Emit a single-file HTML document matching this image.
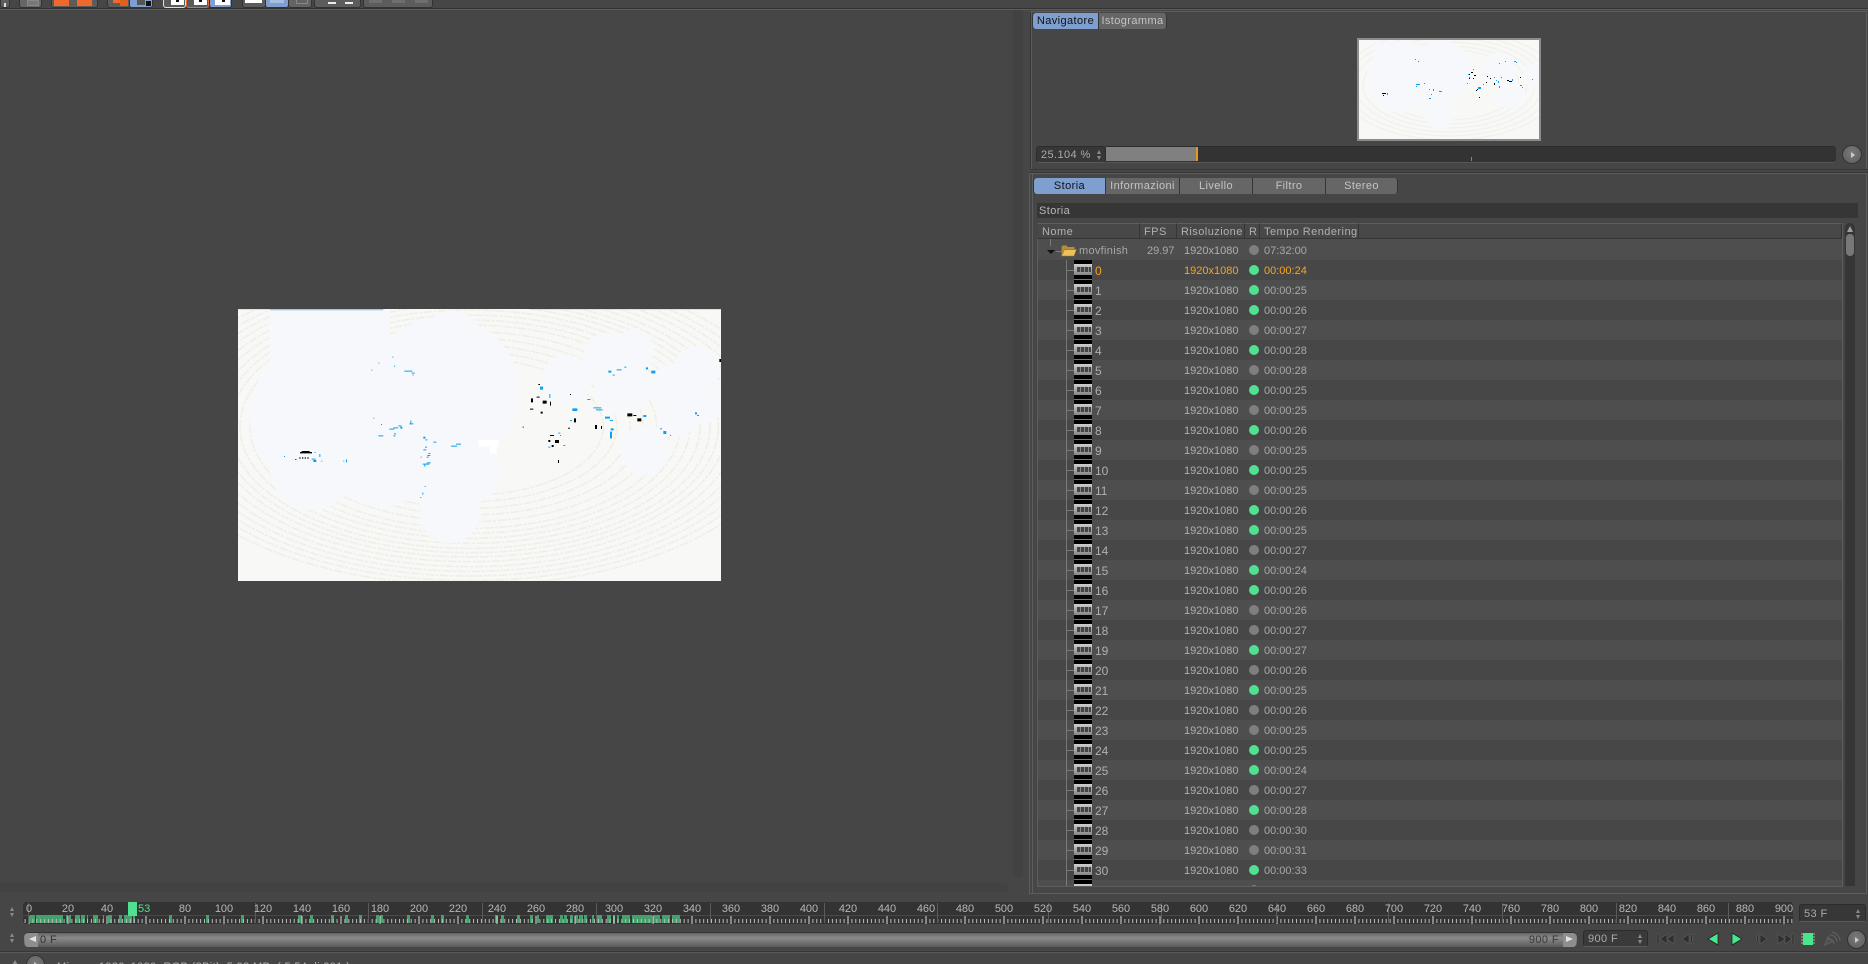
<!DOCTYPE html>
<html><head><meta charset="utf-8"><style>
html,body{margin:0;padding:0;background:#464646}
#p{position:relative;width:1868px;height:964px;overflow:hidden;background:#464646;font:11px "Liberation Sans",sans-serif;color:#b0b0b0}
.t{position:absolute;top:0;height:7px;background:#5c5c5c;border:1px solid #333;border-top:0;border-radius:0 0 3px 3px}
.o{position:absolute;top:0;height:6px;background:#f0682e}
.l{position:absolute;background:#5d5d5d}
.d{position:absolute;background:#363636}
.tab{position:absolute;height:16px;line-height:17px;background:#666;color:#c4c4c4;text-align:center;letter-spacing:.4px;border-right:1px solid #353535;box-sizing:border-box}
.on{background:#7f9fd0;color:#111}
.h{position:absolute;top:223px;height:16px;line-height:16px;background:#484848;border-top:1px solid #5e5e5e;border-bottom:1px solid #353535;border-right:1px solid #353535;box-sizing:border-box;padding-left:4px;color:#b0b0b0;letter-spacing:.45px;white-space:nowrap;overflow:hidden}
#list{position:absolute;left:1038px;top:239px;width:804px;height:647px;overflow:hidden;background:#474747}
.r{position:relative;height:20px;background:#474747}
.r.x{background:#4e4e4e}
.r>*{position:absolute;top:4px;line-height:14px;font-style:normal;font-weight:normal;text-decoration:none;white-space:nowrap}
.r b{left:57px;color:#b0b0b0;font-size:12px}
.r i{left:146px;color:#aab0b4}
.r em{left:226px;color:#a8a8a8}
.r u{left:211px;top:5px;width:10px;height:10px;border-radius:50%;background:#50e090}
.r u.g{background:#7f7f7f}
.r s{left:36px;top:0;width:18px;height:20px;background:linear-gradient(#000 0,#000 4px,#cfcfcf 4px,#858585 15px,#000 15px,#000 19px,#777 19px)}
.r s:after{content:"";position:absolute;left:3px;top:7px;width:14px;height:5px;background:repeating-linear-gradient(90deg,#444 0,#444 3px,#888 3px,#888 4px)}
.r q{left:28px;top:10px;width:8px;height:1px;background:#7a7a7a;quotes:none}
.r.c b{color:#f5a623}.r.c i{color:#f5a623}.r.c em{color:#f5a623}
.r.m>*{top:5px}
.fld{position:absolute;background:#373737;border:1px solid #2c2c2c;border-bottom-color:#5a5a5a;border-radius:3px;box-sizing:border-box;color:#aaa;line-height:17px;padding-left:4px;letter-spacing:.4px}
.sp{position:absolute;width:7px;height:13px}
.sp:before,.sp:after{content:"";position:absolute;left:0;border-left:3.5px solid transparent;border-right:3.5px solid transparent}
.sp:before{top:0;border-bottom:5px solid #8a8a8a}
.sp:after{bottom:0;border-top:5px solid #8a8a8a}
.sp.n{width:5px;height:10px}
.sp.n:before{border-left-width:2.5px;border-right-width:2.5px;border-bottom-width:4px}
.sp.n:after{border-left-width:2.5px;border-right-width:2.5px;border-top-width:4px}
.cb{position:absolute;border-radius:50%;background:radial-gradient(circle at 50% 40%,#7a7a7a,#5c5c5c);border:1px solid #333;box-sizing:border-box}
.cb:after{content:"";position:absolute;left:42%;top:35%;border-left:4px solid #ccc;border-top:3px solid transparent;border-bottom:3px solid transparent}
</style></head><body><div id="p">

<!-- toolbar -->
<div class="t" style="left:0;width:8px"><div style="position:absolute;left:3px;top:3px;width:2px;height:4px;background:#ddd"></div></div>
<div class="t" style="left:19px;width:21px;background:#666"><div style="position:absolute;left:7px;top:0;width:10px;height:4px;background:#777;border:1px solid #888"></div></div>
<div class="t" style="left:51px;width:45px"></div><div class="o" style="left:54px;width:15px"></div><div class="o" style="left:77px;width:15px"></div>
<div class="t" style="left:107px;width:22px"></div><div class="o" style="left:113px;width:7px;height:3px"></div><div class="o" style="left:120px;width:8px;background:#e0601e"></div>
<div class="t" style="left:129px;width:22px;background:#7f9fd0"><div style="position:absolute;left:7px;top:0;width:8px;height:5px;background:#555"></div><div style="position:absolute;left:16px;top:1px;width:5px;height:5px;background:#111"></div></div>
<div class="t" style="left:163px;width:21px;background:#5a5a5a;border-color:#ddd"><div style="position:absolute;left:7px;top:0;width:13px;height:5px;background:#fff"></div><div style="position:absolute;left:12px;top:0;width:3px;height:2px;background:#111"></div></div>
<div class="t" style="left:186px;width:21px;background:#5a5a5a;border-color:#e86a30"><div style="position:absolute;left:7px;top:0;width:13px;height:5px;background:#fff"></div><div style="position:absolute;left:12px;top:0;width:3px;height:2px;background:#111"></div></div>
<div class="t" style="left:209px;width:21px;background:#7f9fd0"><div style="position:absolute;left:5px;top:0;width:15px;height:5px;background:#fff"></div><div style="position:absolute;left:12px;top:0;width:3px;height:2px;background:#111"></div></div>
<div class="t" style="left:242px;width:22px"><div style="position:absolute;left:2px;top:0;width:17px;height:3px;background:#fff"></div></div>
<div class="t" style="left:265px;width:22px;background:#7f9fd0"><div style="position:absolute;left:4px;top:0;width:14px;height:3px;background:#a8bede"></div></div>
<div class="t" style="left:288px;width:22px;background:#636363"><div style="position:absolute;left:7px;top:0;width:10px;height:3px;border:1px solid #888;border-top:0"></div></div>
<div class="t" style="left:314px;width:45px"></div>
<div class="o" style="left:328px;width:8px;height:2px;top:2px;background:#eee"></div><div class="o" style="left:345px;width:8px;height:2px;top:2px;background:#eee"></div>
<div class="t" style="left:363px;width:68px"></div>
<div class="o" style="left:369px;width:13px;height:3px;background:#6e6e6e"></div><div class="o" style="left:392px;width:13px;height:3px;background:#6e6e6e"></div><div class="o" style="left:415px;width:13px;height:3px;background:#6e6e6e"></div>
<div class="d" style="left:0;top:8px;width:1868px;height:1px;background:#333"></div>
<div class="l" style="left:0;top:9px;width:1868px;height:1px"></div>

<!-- viewport scrollbars -->
<div style="position:absolute;left:1013px;top:10px;width:10px;height:868px;background:#424242;border-radius:0 0 5px 5px"></div>
<div style="position:absolute;left:0;top:883px;width:1008px;height:9px;background:#424242;border-radius:0 4px 4px 0"></div>

<!-- main image -->
<svg style="position:absolute;left:238px;top:309px" width="483" height="272" viewBox="24 27 1449 816">
<rect x="24" y="27" width="1449" height="816" fill="#f8f9f6"/>
<g fill="none" stroke="#efefe9" stroke-width="5" stroke-dasharray="26 5 9 4">
<ellipse cx="720" cy="380" rx="400" ry="205"/><ellipse cx="720" cy="380" rx="440" ry="225"/><ellipse cx="720" cy="380" rx="480" ry="245"/><ellipse cx="720" cy="380" rx="520" ry="265"/><ellipse cx="720" cy="380" rx="560" ry="285"/><ellipse cx="720" cy="380" rx="600" ry="305"/><ellipse cx="720" cy="380" rx="630" ry="320"/><ellipse cx="720" cy="380" rx="660" ry="335"/><ellipse cx="720" cy="380" rx="690" ry="350"/><ellipse cx="720" cy="380" rx="720" ry="365"/><ellipse cx="720" cy="380" rx="745" ry="378"/><ellipse cx="720" cy="380" rx="770" ry="391"/><ellipse cx="720" cy="380" rx="800" ry="405"/><ellipse cx="720" cy="380" rx="830" ry="420"/><ellipse cx="720" cy="380" rx="860" ry="434"/><ellipse cx="720" cy="380" rx="890" ry="448"/><ellipse cx="720" cy="380" rx="920" ry="462"/><ellipse cx="720" cy="380" rx="955" ry="476"/>
</g>
<g fill="#f6f8fc">
<rect x="120" y="30" width="360" height="260"/><circle cx="665" cy="120" r="88"/><circle cx="640" cy="280" r="230"/><circle cx="300" cy="350" r="240"/><circle cx="250" cy="500" r="130"/><circle cx="450" cy="450" r="170"/><circle cx="720" cy="520" r="92"/><circle cx="660" cy="640" r="90"/><circle cx="560" cy="500" r="100"/><circle cx="1130" cy="170" r="70"/><circle cx="1210" cy="150" r="60"/><circle cx="1010" cy="240" r="75"/><circle cx="1180" cy="260" r="85"/><circle cx="1330" cy="260" r="70"/><circle cx="1400" cy="210" r="70"/><circle cx="1420" cy="310" r="60"/><circle cx="1340" cy="350" r="60"/><circle cx="1245" cy="450" r="75"/>
</g>
<rect x="120" y="27" width="340" height="4" fill="#8fcdf0"/><rect x="24" y="27" width="96" height="3" fill="#d5e2ea"/><rect x="900" y="27" width="573" height="3" fill="#e6ded6"/>
<path fill="#0ca0f0" d="M523 212h24v3h-24zM545 218h9v3h-9zM548 224h3v3h-3zM424 209h3v3h-3zM445 188h3v3h-3zM487 170h3v3h-3zM492 197h3v3h-3zM478 386h15v3h-15zM490 382h15v3h-15zM505 376h9v3h-9zM511 380h6v6h-6zM541 362h3v9h-3zM538 370h12v3h-12zM445 406h15v3h-15zM490 406h6v3h-6zM492 400h6v3h-6zM430 353h3v3h-3zM453 372h3v3h-3zM580 410h6v6h-6zM586 418h6v3h-6zM610 425h9v3h-9zM663 437h18v3h-18zM678 431h15v3h-15zM592 465h9v3h-9zM595 459h6v3h-6zM590 470h6v3h-6zM583 494h3v6h-3zM578 491h20v3h-20zM590 487h12v3h-12zM585 440h6v3h-6zM580 448h9v3h-9zM572 470h3v3h-3zM584 558h3v3h-3zM577 578h3v6h-3zM571 591h3v3h-3zM245 476h12v3h-12zM250 480h9v6h-9zM268 462h3v9h-3zM274 482h3v3h-3zM254 456h3v3h-3zM162 468h3v3h-3zM340 482h3v3h-3zM348 478h3v9h-3zM930 260h9v9h-9zM958 282h3v12h-3zM1027 325h15v8h-15zM1020 360h6v3h-6zM1072 297h9v3h-9zM1090 322h24v3h-24zM1098 328h20v3h-20zM1125 350h15v6h-15zM1140 360h9v3h-9zM1142 385h9v6h-9zM1140 395h6v20h-6zM1135 212h9v6h-9zM1148 224h6v3h-6zM1160 208h15v3h-15zM1183 200h6v3h-6zM1248 202h6v6h-6zM1264 212h12v8h-12zM1240 345h9v6h-9zM1395 337h6v6h-6zM1401 345h6v3h-6zM1300 393h9v9h-9zM1290 385h6v3h-6zM1320 405h3v3h-3zM985 398h6v3h-6zM955 440h6v3h-6zM1000 435h6v3h-6zM990 405h3v3h-3z"/>
<path fill="#000" d="M215 453h24v3h-24zM210 456h36v4h-36zM208 472h4v4h-4zM216 472h4v4h-4zM224 472h4v4h-4zM232 472h4v4h-4zM196 477h3v3h-3zM903 295h6v12h-6zM938 302h12v9h-12zM925 252h5v3h-5zM920 290h9v3h-9zM900 326h10v3h-10zM932 335h6v6h-6zM960 305h3v12h-3zM1020 282h3v3h-3zM1032 355h6v12h-6zM1095 375h6v12h-6zM1113 378h3v9h-3zM1192 340h15v9h-15zM1222 355h12v9h-12zM1210 345h9v3h-9zM960 405h12v3h-12zM975 420h12v9h-12zM955 420h6v6h-6zM965 435h6v6h-6zM984 480h3v9h-3zM878 380h3v3h-3zM1468 177h5v9h-5zM1015 383h4v4h-4z"/>
<path fill="#fff" d="M745 420h60v20h-60zM780 440h20v20h-20z"/>
</svg>

<!-- Navigator panel -->
<div class="l" style="left:1030px;top:11px;width:837px;height:1px"></div>
<div class="d" style="left:1030px;top:12px;width:1px;height:157px"></div>
<div class="l" style="left:1031px;top:12px;width:1px;height:157px"></div>
<div class="l" style="left:1866px;top:12px;width:1px;height:157px"></div>
<div class="d" style="left:1030px;top:169px;width:838px;height:1px"></div>
<div class="tab on" style="left:1033px;top:13px;width:66px;border-radius:3px 0 0 3px;box-shadow:-1px 0 0 #333">Navigatore</div>
<div class="tab" style="left:1099px;top:13px;width:68px;border-radius:0 3px 3px 0">Istogramma</div>
<svg style="position:absolute;left:1357px;top:38px;border:2px solid #8c8c8c;box-sizing:border-box" width="184" height="103" viewBox="0 0 180 99">
<rect width="180" height="99" fill="#f8f9f6"/>
<g fill="none" stroke="#f1f1ec" stroke-width="1.2"><ellipse cx="90" cy="45" rx="70" ry="35"/><ellipse cx="90" cy="45" rx="78" ry="39"/><ellipse cx="90" cy="45" rx="86" ry="43"/><ellipse cx="90" cy="45" rx="94" ry="47"/><ellipse cx="90" cy="45" rx="102" ry="51"/><ellipse cx="90" cy="45" rx="110" ry="55"/></g>
<g fill="#f6f8fc"><circle cx="82" cy="30" r="30"/><circle cx="40" cy="40" r="32"/><circle cx="80" cy="75" r="14"/><rect x="15" y="2" width="45" height="30"/><circle cx="140" cy="30" r="17"/><circle cx="152" cy="55" r="14"/><circle cx="175" cy="35" r="11"/></g>
<path fill="#0ca0f0" d="M28 53h1v2h-1zM56 19h1v1h-1zM59 21h1v1h-1zM57 44h4v1h-4zM57 46h1v1h-1zM65 43h1v1h-1zM70 49h1v1h-1zM74 49h1v2h-1zM72 54h1v1h-1zM70 58h2v1h-2zM80 51h3v1h-3zM114 29h1v1h-1zM109 34h1v1h-1zM108 43h1v1h-1zM110 37h1v1h-1zM124 44h1v1h-1zM119 47h3v2h-3zM135 37h1v1h-1zM137 40h1v1h-1zM142 37h1v1h-1zM139 41h1v2h-1zM140 46h1v2h-1zM153 39h1v2h-1zM161 45h2v1h-2zM163 47h1v1h-1zM173 39h1v1h-1zM140 23h1v1h-1zM146 21h1v1h-1zM155 21h2v1h-2zM157 22h1v1h-1z"/>
<path fill="#000" d="M23 53h4v1h-4zM24 55h1v1h-1zM112 32h2v1h-2zM110 34h1v1h-1zM115 35h2v1h-2zM114 38h1v1h-1zM110 38h1v1h-1zM127 42h1v1h-1zM128 36h1v1h-1zM131 38h1v1h-1zM135 43h1v2h-1zM148 40h2v1h-2zM150 41h3v1h-3zM161 37h1v1h-1zM120 57h1v1h-1zM118 49h1v1h-1zM117 50h1v1h-1z"/>
</svg>
<div class="fld" style="left:1036px;top:146px;width:70px;height:17px;line-height:17px">25.104 %<span class="sp n" style="left:60px;top:3px"></span></div>
<div style="position:absolute;left:1106px;top:146px;width:730px;height:17px;background:#333;border-top:1px solid #2b2b2b;border-bottom:1px solid #565656;box-sizing:border-box;border-radius:0 3px 3px 0"></div>
<div style="position:absolute;left:1106px;top:147px;width:90px;height:14px;background:#808080"></div>
<div style="position:absolute;left:1196px;top:147px;width:2px;height:14px;background:#e09a20"></div>
<div style="position:absolute;left:1471px;top:157px;width:1px;height:4px;background:#a8842e"></div>
<div class="cb" style="left:1842px;top:145px;width:20px;height:19px"></div>

<!-- History panel -->
<div class="d" style="left:1030px;top:172px;width:838px;height:1px"></div>
<div class="l" style="left:1030px;top:173px;width:837px;height:1px"></div>
<div class="l" style="left:1029px;top:174px;width:1px;height:719px"></div>
<div class="l" style="left:1032px;top:174px;width:1px;height:719px"></div>
<div class="l" style="left:1866px;top:174px;width:1px;height:719px"></div>
<div class="l" style="left:1029px;top:893px;width:838px;height:1px"></div>
<div class="tab on" style="left:1034px;top:178px;width:72px;border-radius:3px 0 0 3px;box-shadow:-1px 0 0 #333">Storia</div>
<div class="tab" style="left:1106px;top:178px;width:74px">Informazioni</div>
<div class="tab" style="left:1180px;top:178px;width:73px">Livello</div>
<div class="tab" style="left:1253px;top:178px;width:73px">Filtro</div>
<div class="tab" style="left:1326px;top:178px;width:72px;border-radius:0 3px 3px 0">Stereo</div>
<div class="d" style="left:1037px;top:203px;width:821px;height:15px;line-height:17px;padding-left:2px;box-sizing:border-box;color:#b8b8b8;letter-spacing:.4px">Storia</div>

<div class="h" style="left:1038px;width:102px">Nome</div>
<div class="h" style="left:1140px;width:37px">FPS</div>
<div class="h" style="left:1177px;width:68px">Risoluzione</div>
<div class="h" style="left:1245px;width:15px">R</div>
<div class="h" style="left:1260px;width:99px">Tempo Rendering</div>
<div class="h" style="left:1359px;width:483px"></div>

<div id="list">
<div class="r x m" style="height:21px"><b style="left:41px;letter-spacing:.3px;color:#a8a8a8;font-size:11px">movfinish</b><i style="left:109px;color:#a8a8a8">29.97</i><i>1920x1080</i><u class="g" style="top:6px"></u><em>07:32:00</em></div>
<div class="r c"><s></s><q></q><b>0</b><i>1920x1080</i><u></u><em>00:00:24</em></div>
<div class="r x"><s></s><q></q><b>1</b><i>1920x1080</i><u></u><em>00:00:25</em></div>
<div class="r"><s></s><q></q><b>2</b><i>1920x1080</i><u></u><em>00:00:26</em></div>
<div class="r x"><s></s><q></q><b>3</b><i>1920x1080</i><u class="g"></u><em>00:00:27</em></div>
<div class="r"><s></s><q></q><b>4</b><i>1920x1080</i><u></u><em>00:00:28</em></div>
<div class="r x"><s></s><q></q><b>5</b><i>1920x1080</i><u class="g"></u><em>00:00:28</em></div>
<div class="r"><s></s><q></q><b>6</b><i>1920x1080</i><u></u><em>00:00:25</em></div>
<div class="r x"><s></s><q></q><b>7</b><i>1920x1080</i><u class="g"></u><em>00:00:25</em></div>
<div class="r"><s></s><q></q><b>8</b><i>1920x1080</i><u></u><em>00:00:26</em></div>
<div class="r x"><s></s><q></q><b>9</b><i>1920x1080</i><u class="g"></u><em>00:00:25</em></div>
<div class="r"><s></s><q></q><b>10</b><i>1920x1080</i><u></u><em>00:00:25</em></div>
<div class="r x"><s></s><q></q><b>11</b><i>1920x1080</i><u class="g"></u><em>00:00:25</em></div>
<div class="r"><s></s><q></q><b>12</b><i>1920x1080</i><u></u><em>00:00:26</em></div>
<div class="r x"><s></s><q></q><b>13</b><i>1920x1080</i><u></u><em>00:00:25</em></div>
<div class="r"><s></s><q></q><b>14</b><i>1920x1080</i><u class="g"></u><em>00:00:27</em></div>
<div class="r x"><s></s><q></q><b>15</b><i>1920x1080</i><u></u><em>00:00:24</em></div>
<div class="r"><s></s><q></q><b>16</b><i>1920x1080</i><u></u><em>00:00:26</em></div>
<div class="r x"><s></s><q></q><b>17</b><i>1920x1080</i><u class="g"></u><em>00:00:26</em></div>
<div class="r"><s></s><q></q><b>18</b><i>1920x1080</i><u class="g"></u><em>00:00:27</em></div>
<div class="r x"><s></s><q></q><b>19</b><i>1920x1080</i><u></u><em>00:00:27</em></div>
<div class="r"><s></s><q></q><b>20</b><i>1920x1080</i><u class="g"></u><em>00:00:26</em></div>
<div class="r x"><s></s><q></q><b>21</b><i>1920x1080</i><u></u><em>00:00:25</em></div>
<div class="r"><s></s><q></q><b>22</b><i>1920x1080</i><u class="g"></u><em>00:00:26</em></div>
<div class="r x"><s></s><q></q><b>23</b><i>1920x1080</i><u class="g"></u><em>00:00:25</em></div>
<div class="r"><s></s><q></q><b>24</b><i>1920x1080</i><u></u><em>00:00:25</em></div>
<div class="r x"><s></s><q></q><b>25</b><i>1920x1080</i><u></u><em>00:00:24</em></div>
<div class="r"><s></s><q></q><b>26</b><i>1920x1080</i><u class="g"></u><em>00:00:27</em></div>
<div class="r x"><s></s><q></q><b>27</b><i>1920x1080</i><u></u><em>00:00:28</em></div>
<div class="r"><s></s><q></q><b>28</b><i>1920x1080</i><u class="g"></u><em>00:00:30</em></div>
<div class="r x"><s></s><q></q><b>29</b><i>1920x1080</i><u class="g"></u><em>00:00:31</em></div>
<div class="r"><s></s><q></q><b>30</b><i>1920x1080</i><u></u><em>00:00:33</em></div>
<div class="r x"><s></s><q></q><u class="g"></u></div>
<!-- tree -->
<div style="position:absolute;left:28px;top:21px;width:1px;height:630px;background:#7a7a7a"></div>
<div style="position:absolute;left:12px;top:0;width:1px;height:7px;background:#7a7a7a"></div>
<div style="position:absolute;left:9px;top:11px;border-top:4px solid #111;border-left:4px solid transparent;border-right:4px solid transparent"></div>
<div style="position:absolute;left:18px;top:12px;width:5px;height:1px;background:#7a7a7a"></div>
<svg style="position:absolute;left:23px;top:6px" width="16" height="12" viewBox="0 0 16 12"><path d="M0.5 2l1-1.5h4l1 1.5h7v2H4L0.5 11z" fill="#b58d3a"/><path d="M3.5 4.5H15.5L13 11H0.5z" fill="#ecc25e" stroke="#9a7428" stroke-width=".6"/></svg>
</div>
<div style="position:absolute;left:1037px;top:239px;width:1px;height:647px;background:#5d5d5d"></div>
<div style="position:absolute;left:1842px;top:223px;width:1px;height:663px;background:#5d5d5d"></div>
<div class="l" style="left:1037px;top:886px;width:806px;height:1px"></div>
<!-- scrollbar -->
<div style="position:absolute;left:1845px;top:223px;width:10px;height:663px;background:#363636;border-radius:5px 5px 0 0"></div>
<div style="position:absolute;left:1847px;top:226px;border-bottom:6px solid #a0a0a0;border-left:3px solid transparent;border-right:3px solid transparent"></div>
<div style="position:absolute;left:1846px;top:234px;width:8px;height:22px;background:#787878;border-radius:4px"></div>

<!-- timeline -->
<div class="sp n" style="left:10px;top:907px"></div>
<div class="sp n" style="left:10px;top:933px"></div>
<svg style="position:absolute;left:23px;top:902px" width="1770" height="22" viewBox="23 902 1770 22" font-family="Liberation Sans, sans-serif" font-size="11" fill="#b8b8b8">
<defs>
<pattern id="s" patternUnits="userSpaceOnUse" x="28.5" y="902" width="3.9" height="22"><rect width="1" height="4" y="17" fill="#bdbdbd"/></pattern>
<pattern id="m" patternUnits="userSpaceOnUse" x="28.5" y="902" width="39" height="22"><rect width="1" height="8" y="14" fill="#d8d8d8"/></pattern>
</defs>
<rect x="23" y="902" width="1770" height="22" fill="#333" rx="3"/>
<rect x="23" y="915" width="1770" height="1" fill="#484848"/>
<path fill="#44a06c" d="M30 915h5v8h-5zM36 915h3v8h-3zM39 915h4v8h-4zM43 915h5v8h-5zM48 915h5v8h-5zM53 915h4v8h-4zM57 915h6v8h-6zM66 915h2v8h-2zM69 915h2v8h-2zM75 915h5v8h-5zM81 915h4v8h-4zM87 915h1v8h-1zM93 915h5v8h-5zM103 915h1v8h-1zM108 915h4v8h-4zM119 915h3v8h-3zM124 915h8v8h-8zM133 915h2v8h-2zM169 915h3v8h-3zM206 915h3v8h-3zM241 915h3v8h-3zM298 915h4v8h-4zM310 915h3v8h-3zM331 915h3v8h-3zM345 915h3v8h-3zM359 915h3v8h-3zM376 915h3v8h-3zM380 915h3v8h-3zM407 915h3v8h-3zM431 915h3v8h-3zM441 915h3v8h-3zM466 915h3v8h-3zM495 915h3v8h-3zM501 915h3v8h-3zM517 915h3v8h-3zM530 915h3v8h-3zM537 915h2v8h-2zM546 915h7v8h-7zM560 915h3v8h-3zM564 915h3v8h-3zM570 915h3v8h-3zM575 915h3v8h-3zM579 915h4v8h-4zM584 915h3v8h-3zM592 915h2v8h-2zM597 915h5v8h-5zM607 915h4v8h-4zM613 915h2v8h-2zM617 915h2v8h-2zM622 915h8v8h-8zM632 915h20v8h-20zM653 915h7v8h-7zM662 915h8v8h-8zM672 915h8v8h-8z"/>
<rect x="23" y="917" width="1770" height="6" fill="url(#s)"/>
<rect x="23" y="902" width="1770" height="22" fill="url(#m)"/>
<path stroke="#5c5c5c" d="M28.5 903v20M255.5 903v20M368.5 903v20M482.5 903v20M596.5 903v20M710.5 903v20M824.5 903v20M937.5 903v20M1048.5 903v20M1161.5 903v20M1276.5 903v20M1388.5 903v20M1502.5 903v20M1616.5 903v20M1728.5 903v20"/>
<g text-anchor="middle">
<text x="29" y="912">0</text><text x="68" y="912">20</text><text x="107" y="912">40</text><text x="185" y="912">80</text><text x="224" y="912">100</text><text x="263" y="912">120</text><text x="302" y="912">140</text><text x="341" y="912">160</text><text x="380" y="912">180</text><text x="419" y="912">200</text><text x="458" y="912">220</text><text x="497" y="912">240</text><text x="536" y="912">260</text><text x="575" y="912">280</text><text x="614" y="912">300</text><text x="653" y="912">320</text><text x="692" y="912">340</text><text x="731" y="912">360</text><text x="770" y="912">380</text><text x="809" y="912">400</text><text x="848" y="912">420</text><text x="887" y="912">440</text><text x="926" y="912">460</text><text x="965" y="912">480</text><text x="1004" y="912">500</text><text x="1043" y="912">520</text><text x="1082" y="912">540</text><text x="1121" y="912">560</text><text x="1160" y="912">580</text><text x="1199" y="912">600</text><text x="1238" y="912">620</text><text x="1277" y="912">640</text><text x="1316" y="912">660</text><text x="1355" y="912">680</text><text x="1394" y="912">700</text><text x="1433" y="912">720</text><text x="1472" y="912">740</text><text x="1511" y="912">760</text><text x="1550" y="912">780</text><text x="1589" y="912">800</text><text x="1628" y="912">820</text><text x="1667" y="912">840</text><text x="1706" y="912">860</text><text x="1745" y="912">880</text><text x="1784" y="912">900</text>
</g>
<rect x="128" y="902" width="9" height="14" fill="#50e090"/>
<text x="138" y="912" fill="#50e090">53</text>
</svg>
<div class="fld" style="left:1799px;top:904px;width:67px;height:18px;line-height:18px">53 F<span class="sp n" style="left:56px;top:4px"></span></div>

<!-- scrub bar -->
<div style="position:absolute;left:24px;top:932px;width:1553px;height:15px;background:linear-gradient(#666,#8a8a8a 35%,#6a6a6a 80%,#5a5a5a);border-radius:4px;border-top:1px solid #333;box-sizing:border-box;color:#333;line-height:15px;padding-left:16px;letter-spacing:.4px">0 F<span style="position:absolute;right:18px;top:0;color:#3a3a3a">900 F</span></div>
<div style="position:absolute;left:25px;top:933px;width:13px;height:14px;background:#8e8e8e;border-radius:3px 0 0 3px"></div>
<div style="position:absolute;left:1563px;top:933px;width:13px;height:14px;background:#8e8e8e;border-radius:0 3px 3px 0"></div>
<div style="position:absolute;left:29px;top:936px;border-right:7px solid #e4e4e4;border-top:3.5px solid transparent;border-bottom:3.5px solid transparent"></div>
<div style="position:absolute;left:1566px;top:936px;border-left:7px solid #e4e4e4;border-top:3.5px solid transparent;border-bottom:3.5px solid transparent"></div>
<div class="fld" style="left:1583px;top:930px;width:65px;height:17px;background:#3a3a3a;line-height:17px">900 F<span class="sp n" style="left:54px;top:3px"></span></div>

<!-- transport -->
<svg style="position:absolute;left:1650px;top:928px" width="218" height="22" viewBox="1650 928 218 22">
<g fill="#2f2f2f" stroke="#5e5e5e" stroke-width=".6">
<path d="M1657 934h2v10h-2zM1667 934v10l-7-5zM1674 934v10l-7-5z"/>
<path d="M1689 934v10l-7-5zM1692 934q-3 5 0 10h1.500q-2.500-5 0-10z"/>
<path d="M1757 934q3 5 0 10h-1.500q2.500-5 0-10zM1760 934l7 5-7 5z"/>
<path d="M1778 934l7 5-7 5zM1785 934l7 5-7 5zM1792 934h2v10h-2z"/>
</g>
<path d="M1718 933v12l-10-6z" fill="#46e88c" stroke="#222" stroke-width=".8"/>
<path d="M1732 933l10 6-10 6z" fill="#46e88c" stroke="#222" stroke-width=".8"/>
<rect x="1803" y="933" width="10" height="12" fill="#46e88c"/>
<path d="M1801 934h2M1801 937h2M1801 940h2M1801 943h2M1813 934h2M1813 937h2M1813 940h2M1813 943h2" stroke="#aaa" stroke-width="1"/>
<g fill="none" stroke="#5e5e5e" stroke-width="1.200"><path d="M1825 945l3-8 5 4z" fill="#4a4a4a"/><path d="M1830 935a7 7 0 0 1 7 7M1832 932a10 10 0 0 1 8 9M1828 939a6 6 0 0 1 6 5"/></g>
</svg>
<div class="cb" style="left:1847px;top:930px;width:19px;height:19px"></div>

<!-- status bar -->
<div class="d" style="left:0;top:951px;width:1868px;height:1px"></div>
<div class="l" style="left:0;top:952px;width:1868px;height:1px;background:#5a5a5a"></div>
<div class="sp" style="left:12px;top:960px"></div>
<div class="cb" style="left:26px;top:955px;width:19px;height:19px"></div>
<div style="position:absolute;left:57px;top:960px;line-height:14px;color:#b0b0b0;letter-spacing:.35px;white-space:nowrap">Misure: 1920x1080, RGB (8Bit), 5.93 MB, ( 5.54 di 901 )</div>
</div></body></html>
